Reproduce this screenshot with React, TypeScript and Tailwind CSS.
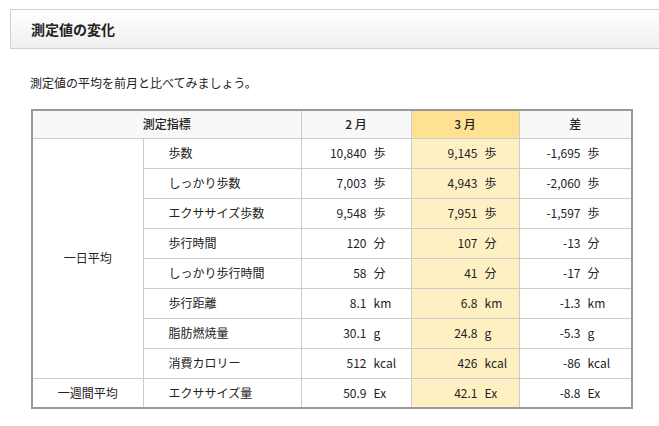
const rows: [string, string, string, string, string][] = [
  ["歩数", "10,840", "9,145", "-1,695", "歩"],
  ["しっかり歩数", "7,003", "4,943", "-2,060", "歩"],
  ["エクササイズ歩数", "9,548", "7,951", "-1,597", "歩"],
  ["歩行時間", "120", "107", "-13", "分"],
  ["しっかり歩行時間", "58", "41", "-17", "分"],
  ["歩行距離", "8.1", "6.8", "-1.3", "km"],
  ["脂肪燃焼量", "30.1", "24.8", "-5.3", "g"],
  ["消費カロリー", "512", "426", "-86", "kcal"],
];

function Val({ n, u, pad }: { n: string; u: string; pad: string }) {
  return (
    <div className={`flex items-center ${pad}`}>
      <span className="w-[60px] text-right">{n}</span>
      <span className="ml-[7px]">{u}</span>
    </div>
  );
}

const cell = "border border-[#cccccc] h-[30px] p-0";

export default function App() {
  return (
    <div
      className="w-[659px] h-[426px] bg-white overflow-hidden text-[#222] text-[12px]"
      style={{ fontFamily: '"Noto Sans CJK JP", "Noto Sans", sans-serif' }}
    >
      <div className="ml-[10px] mt-[9px] h-[40px] border border-r-0 border-[#d0d0d0] bg-gradient-to-b from-white to-[#efefef] flex items-center pl-[20px]">
        <span className="text-[14px] font-bold text-[#222]">測定値の変化</span>
      </div>
      <p className="ml-[30px] mt-[26px] leading-[16px]">測定値の平均を前月と比べてみましょう。</p>
      <table className="ml-[31px] mt-[18px] w-[600px] border-collapse border-2 border-[#999999] table-fixed">
        <colgroup>
          <col className="w-[111px]" />
          <col className="w-[158px]" />
          <col className="w-[110px]" />
          <col className="w-[108px]" />
          <col className="w-[113px]" />
        </colgroup>
        <thead>
          <tr className="h-[28px]">
            <th colSpan={2} className="border border-[#cccccc] bg-[#f8f8f8] font-medium">測定指標</th>
            <th className="border border-[#cccccc] bg-[#f8f8f8] font-medium">2 月</th>
            <th className="border border-[#cccccc] bg-[#ffe194] font-medium">3 月</th>
            <th className="border border-[#cccccc] bg-[#f8f8f8] font-medium">差</th>
          </tr>
        </thead>
        <tbody>
          {rows.map((r, i) => (
            <tr key={r[0]}>
              {i === 0 && (
                <td rowSpan={8} className={`${cell} text-center`}>一日平均</td>
              )}
              <td className={`${cell} pl-[25px]`}>{r[0]}</td>
              <td className={cell}><Val n={r[1]} u={r[4]} pad="pl-[5px]" /></td>
              <td className={`${cell} bg-[#fff0c4]`}><Val n={r[2]} u={r[4]} pad="pl-[6px]" /></td>
              <td className={cell}><Val n={r[3]} u={r[4]} pad="pl-[1px]" /></td>
            </tr>
          ))}
          <tr>
            <td className={`${cell} text-center`}>一週間平均</td>
            <td className={`${cell} pl-[25px]`}>エクササイズ量</td>
            <td className={cell}><Val n="50.9" u="Ex" pad="pl-[5px]" /></td>
            <td className={`${cell} bg-[#fff0c4]`}><Val n="42.1" u="Ex" pad="pl-[6px]" /></td>
            <td className={cell}><Val n="-8.8" u="Ex" pad="pl-[1px]" /></td>
          </tr>
        </tbody>
      </table>
    </div>
  );
}
